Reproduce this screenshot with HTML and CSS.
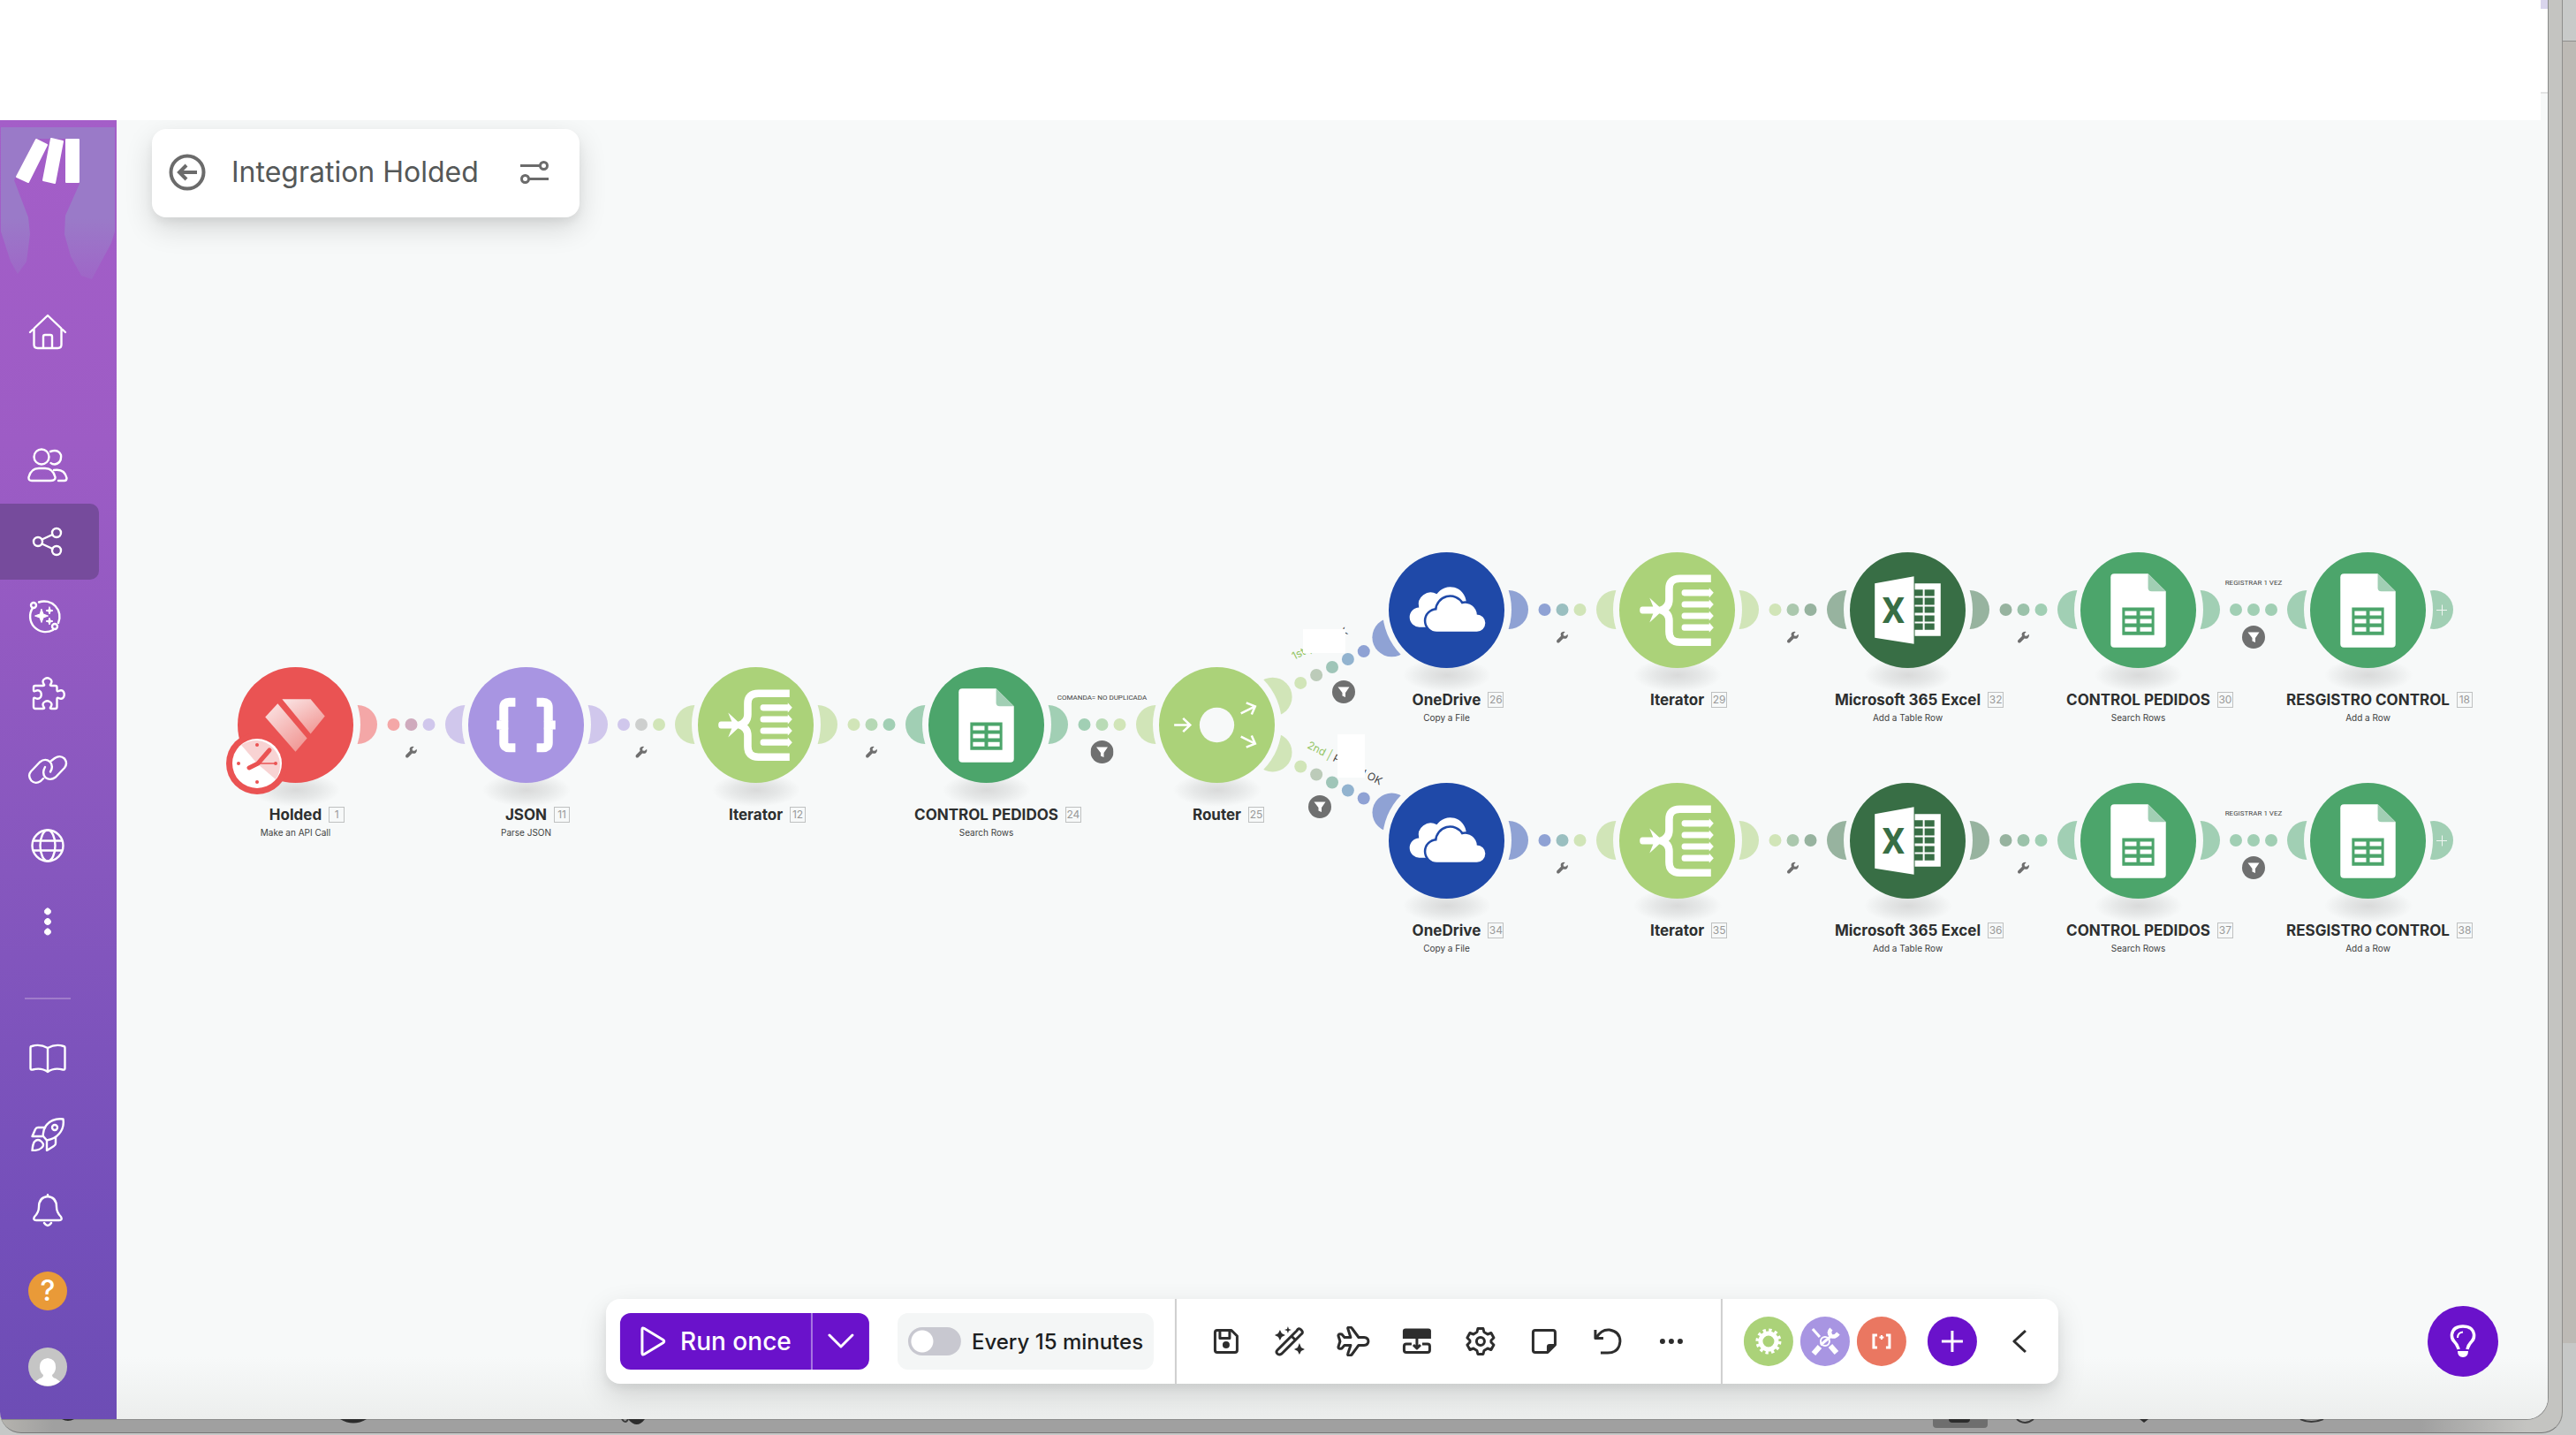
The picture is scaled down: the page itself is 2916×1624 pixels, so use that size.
FILE: index.html
```html
<!DOCTYPE html>
<html lang="en">
<head>
<meta charset="utf-8" />
<title>Integration Holded</title>
<link rel="stylesheet" href="styles.css">
</head>

<body>
<!-- shared icons -->
<svg class="defs" aria-hidden="true">
    <defs>
        <linearGradient id="holdedFade" x1="0" y1="0" x2=".7" y2="1">
            <stop offset="0" stop-color="#fbe6e6"/>
            <stop offset="1" stop-color="#f19a97"/>
        </linearGradient>
        <linearGradient id="ghostFade" x1="0" y1="0" x2="0" y2="1">
            <stop offset=".6" stop-color="#9a7ac8"/>
            <stop offset="1" stop-color="#9a7ac8" stop-opacity=".3"/>
        </linearGradient>
        <symbol id="i-holded" viewBox="-65 -65 130 130">
            <path fill="url(#holdedFade)" d="M-15 -29H17L33 -10L17 10Z"/>
            <path fill="url(#holdedFade)" d="M-20 -24L13 15L0 30L-34 -9Z"/>
        </symbol>
        <symbol id="i-json" viewBox="-65 -65 130 130">
            <g fill="none" stroke="#fff" stroke-width="10">
                <path d="M-12 -25.500H-19Q-25 -25.500 -25 -20V-6Q-25 0 -28 0Q-25 0 -25 6V20Q-25 25.500 -19 25.500H-12"/>
                <path d="M12 -25.500H19Q25 -25.500 25 -20V-6Q25 0 28 0Q25 0 25 6V20Q25 25.500 19 25.500H12"/>
            </g>
            <path fill="#fff" d="M-33 -5H-20V5H-33ZM33 -5H20V5H33Z"/>
        </symbol>
        <symbol id="i-iterator" viewBox="-65 -65 130 130">
            <path fill="none" stroke="#fff" stroke-width="8.500" d="M38 -35.500H3Q-9 -35.500 -9 -24V-12Q-9 -3 -18 0Q-9 3 -9 12V24Q-9 36 3 36H38"/>
            <path fill="#fff" d="M-39 -4H-27L-31 -14L-16 0L-31 14L-27 4H-39Q-42 4 -42 0Q-42 -4 -39 -4Z"/>
            <g id="bars" fill="#fff">
                <path id="bar" d="M8 -23H36V-25L41 -19.500L36 -14V-16H8Q5 -16 5 -19.500Q5 -23 8 -23Z"/>
                <use href="#bar" y="13"/><use href="#bar" y="26"/><use href="#bar" y="39"/>
            </g>
        </symbol>
        <symbol id="i-sheets" viewBox="-65 -65 130 130">
            <path fill="#fff" d="M-27 -41H11L31 -21V38Q31 42 27 42H-27Q-31 42 -31 38V-37Q-31 -41 -27 -41Z"/>
            <path fill="#a1cfb4" d="M11 -41L31 -21H15Q11 -21 11 -25Z"/>
            <path fill="#4ca56b" fill-rule="evenodd" d="M-18 -3H18V28H-18ZM-15 1V6H-2V1ZM2 1V6H15V1ZM-15 10V15H-2V10ZM2 10V15H15V10ZM-15 19V24H-2V19ZM2 19V24H15V19Z"/>
        </symbol>
        <symbol id="i-excel" viewBox="-65 -65 130 130">
            <path fill="#fff" d="M-37 -30L7 -38V38L-37 31Z"/>
            <path fill="#fff" fill-rule="evenodd" d="M8 -30H37V29H8ZM8 -23V-16H17V-23ZM19 -23V-16H30V-23ZM8 -14V-6H17V-14ZM19 -14V-6H30V-14ZM8 -4V3H17V-4ZM19 -4V3H30V-4ZM8 6V13H17V6ZM19 6V13H30V6ZM8 15V22H17V15ZM19 15V22H30V15Z"/>
            <text class="excel-x" x="-16" y="14" text-anchor="middle">X</text>
        </symbol>
        <symbol id="i-onedrive" viewBox="-65 -65 130 130">
            <path fill="#fff" d="M-20 19H-30A11 11 0 0 1 -31 -3A13.500 13.500 0 0 1 -11 -18A18 18 0 0 1 22 -9V0L-10 19Z"/>
            <path fill="#fff" stroke="#1f49a8" stroke-width="5" paint-order="stroke" d="M-11 24A12 12 0 0 1 -11 0A15 15 0 0 1 17 -7A13 13 0 0 1 34 5A9.500 9.500 0 0 1 34 24Z"/>
        </symbol>
        <symbol id="i-router" viewBox="-65 -65 130 130">
            <circle r="19.500" fill="#f7f9f9"/>
            <g fill="none" stroke="#fff" stroke-width="2.500">
                <path d="M-48 0H-31M-38 -7.500L-30 0L-38 7.500"/>
                <path d="M27 -13L43 -21M33 -25L43 -21L39 -12"/>
                <path d="M27 13L43 21M33 25L43 21L39 12"/>
            </g>
        </symbol>
        <symbol id="i-wrench" viewBox="0 0 24 24">
            <path fill="#6f6f6f" d="M22.500 6.500L18.500 10L14.500 9.500L14 5.500L17.500 1.500Q12 0 9.500 4Q8 7 9.500 10L1.500 18Q0 20.500 2 22.500Q4 24 6 22.500L14 14.500Q18 16 21 13.500Q24 10.500 22.500 6.500Z"/>
        </symbol>
        <symbol id="i-filter" viewBox="0 0 26 26">
            <circle cx="13" cy="13" r="13" fill="#6f7070"/>
            <path fill="#fff" d="M6.500 7.500H19.500L15 14V19L11.500 17.500V14Z"/>
        </symbol>
    </defs>
</svg>

<div class="desktop">
<div class="back-window">
<div class="window">
    <div class="topbar"><span class="topbar-edge"></span></div>
    <div class="app">
        <nav class="sidebar" aria-label="Main">
            <a href="#" class="logo" aria-label="Make">
                <svg width="132" height="184" viewBox="0 136 132 184">
                    <path fill="url(#ghostFade)" d="M1 144H130V262L126 275L104 316L92 312L80 290L73 265L74 244L90 208V157H40L16 204L32 246L34 265L30 296L20 310L12 296L1 262Z"/>
                    <path fill="#fff" stroke="#fff" stroke-width="2" stroke-linejoin="round" d="M41 158L53 164L32 206L19 200ZM58 157L71 160L62 207L49 204ZM75 158H89V206H75Z"/>
                </svg>
            </a>
            <a href="#" class="item" aria-label="Home">
                <svg width="44" height="44" viewBox="0 0 44 44"><path d="M2 22L22 3L42 22M6.500 18V36Q6.500 40 10.500 40H33.500Q37.500 40 37.500 36V18M17 40V27Q17 25 19 25H25Q27 25 27 27V40"/></svg>
            </a>
            <a href="#" class="item team" aria-label="Team">
                <svg width="46" height="46" viewBox="0 0 46 46"><ellipse cx="16" cy="13" rx="8.500" ry="8.500"/><path d="M26 7Q35 4 38 11Q39 20 31 21.500Q28 21.500 26.500 20M7.500 40H26Q32 40 31.500 36Q29 26 20 26H13Q4 26 1.500 36Q1 40 5 40ZM30 28Q42 26 44.500 37Q44.500 40 42 40H35"/></svg>
            </a>
            <a href="#" class="item on" aria-label="Scenarios">
                <svg width="36" height="36" viewBox="0 0 36 36"><circle cx="7" cy="18" r="5"/><circle cx="28" cy="8" r="5"/><circle cx="28" cy="28" r="5"/><path d="M11.500 15.500L23.500 10M11.500 20.500L23.500 26"/></svg>
            </a>
            <a href="#" class="item" aria-label="AI agents">
                <svg width="44" height="44" viewBox="0 0 44 44"><path d="M12 4.500A17.500 17.500 0 0 1 34 28M28 36A17.500 17.500 0 0 1 5 11"/><circle cx="6" cy="8" r="3"/><circle cx="30" cy="32" r="3"/><path class="solid" d="M15 12.500L17 18L22.500 20L17 22L15 27.500L13 22L7.500 20L13 18ZM24 10L25 13L28 14L25 15L24 18L23 15L20 14L23 13ZM24 22.500L25 25L28 26L25 27L24 30L23 27L20 26L23 25Z"/></svg>
            </a>
            <a href="#" class="item" aria-label="Templates">
                <svg width="40" height="40" viewBox="0 0 40 40"><path d="M4 13Q4 11 6 11H15Q17 11 15.500 9Q13 5 17 3Q19.500 1.500 22 3Q26 5 23.500 9Q22 11 24 11H28.500Q30.500 11 30.500 13V16Q30.500 18 32.500 17Q36 15 38 18Q39.500 21 38 24Q36 27 32.500 25Q30.500 24 30.500 26V35Q30.500 37 28.500 37H24Q22 37 23.500 35Q26 31 22 29Q19.500 27.500 17 29Q13 31 15.500 35Q17 37 15 37H6Q4 37 4 35V26Q4 24 6 25Q9.500 27 12 24Q13.500 21 12 18Q9.500 15 6 17Q4 18 4 16Z"/></svg>
            </a>
            <a href="#" class="item" aria-label="Connections">
                <svg width="46" height="34" viewBox="0 0 46 34"><path d="M18 27L15 30Q9 34 4.500 29.500Q0 24 4 19L14 8.500Q20 3.500 25.500 8Q30 13 26 19.500"/><path d="M27 7L31 4Q37 0 42 4.500Q46 10 42 15L32 25.500Q26 30 20.500 26Q16 21 20 14"/></svg>
            </a>
            <a href="#" class="item" aria-label="Webhooks">
                <svg width="38" height="38" viewBox="0 0 38 38"><circle cx="19" cy="19" r="17.500"/><ellipse cx="19" cy="19" rx="8.500" ry="17.500"/><path d="M3 13.500H35M3 24.500H35"/></svg>
            </a>
            <a href="#" class="item" aria-label="More">
                <svg width="10" height="34" viewBox="0 0 10 34"><path class="solid" d="M5 2A3.500 3.500 0 1 1 4.900 2ZM5 13.500A3.500 3.500 0 1 1 4.900 13.500ZM5 25A3.500 3.500 0 1 1 4.900 25Z"/></svg>
            </a>
            <hr class="line">
            <a href="#" class="item" aria-label="Resource hub">
                <svg width="42" height="34" viewBox="0 0 42 34"><path d="M21 5Q12 0 3 3Q1.500 3 1.500 5V28Q1.500 30 4 29.500Q14 27 21 32Q28 27 38 29.500Q40.500 30 40.500 28V5Q40.500 3 39 3Q30 0 21 5V32"/></svg>
            </a>
            <a href="#" class="item" aria-label="What's new">
                <svg width="38" height="38" viewBox="0 0 38 38"><path d="M36.500 1.500Q24 0 17 9Q13 15 14 21L18 25.500Q27 24 32 18Q38 11 36.500 1.500Z"/><circle cx="27" cy="11" r="3"/><path d="M16 11H8Q6 11 5 13L1.500 21H13M18 26V37L26 32Q28 31 28 29V22M1.500 37Q2 30 4 27Q8 23 12 27Q16 31 12 34Q9 37 1.500 37Z"/></svg>
            </a>
            <a href="#" class="item" aria-label="Notifications">
                <svg width="34" height="38" viewBox="0 0 34 38"><path d="M17 1V3M17 3Q7 4 7 15Q7 21 2 26Q0 30 4 30H30Q34 30 32 26Q27 21 27 15Q27 4 17 3ZM13 33Q17 39 21 33"/></svg>
            </a>
            <button type="button" class="help" aria-label="Help">?</button>
            <button type="button" class="avatar" aria-label="Profile">
                <svg width="44" height="44" viewBox="0 0 44 44"><circle cx="22" cy="22" r="22" fill="#c5c5c5"/><path fill="#fff" d="M22 12Q32 13 31 24Q30 29 27 31Q27 34 31 35L36 38.500A22 22 0 0 1 8 38.500L13 35Q17 34 17 31Q14 29 13 24Q12 13 22 12Z"/></svg>
            </button>
        </nav>

        <main class="canvas" id="canvas">
            <svg class="wires" id="wires"></svg>
            <header class="title-card">
                <button type="button" class="plain" aria-label="Back">
                    <svg width="44" height="44" viewBox="0 0 44 44" fill="none" stroke="#6b6b6b" stroke-width="4"><circle cx="22" cy="22" r="18.500"/><path d="M33 22H13M21 14L13 22L21 30"/></svg>
                </button>
                <h1>Integration Holded</h1>
                <button type="button" class="plain" aria-label="Scenario inputs">
                    <svg width="34" height="28" viewBox="0 0 34 28" fill="none" stroke="#6b6b6b" stroke-width="3"><path d="M1 6.500H23M11 21.500H33"/><circle cx="27.500" cy="6.500" r="4"/><circle cx="6.500" cy="21.500" r="4"/></svg>
                </button>
            </header>

            <div class="toolbar">
                <div class="run">
                    <button type="button" class="run-main">
                        <svg width="30" height="34" viewBox="0 0 30 34"><path d="M3 3.500Q3 1 5.500 2.500L27 15.500Q28.500 17 27 18.500L5.500 31.500Q3 33 3 30.500Z"/></svg>
                        Run once
                    </button>
                    <button type="button" class="run-more" aria-label="Run options">
                        <svg width="30" height="18" viewBox="0 0 30 18"><path d="M2 2L15 15L28 2"/></svg>
                    </button>
                </div>
                <label class="schedule"><input type="checkbox" role="switch">Every 15 minutes</label>
                <div class="tools">
                    <button type="button" aria-label="Save"><svg width="32" height="32" viewBox="0 0 32 32"><path d="M6 3.500H22L28.500 10V26Q28.500 28.500 26 28.500H6Q3.500 28.500 3.500 26V6Q3.500 3.500 6 3.500ZM9 4V12.500H20V4"/><circle class="fill" cx="16" cy="20" r="4"/></svg></button>
                    <button type="button" aria-label="Auto-align"><svg width="36" height="34" viewBox="0 0 36 34"><path d="M4 27L26 5Q28 1 31 4Q34 7 31 9L9 31Q6 33 4 31Q2 29 4 27ZM20 11L24 15"/><path class="fill" d="M7 4L9 8L13 10L9 12L7 16L5 12L1 10L5 8ZM16 0L17 3L20 4L17 5L16 8L15 5L12 4L15 3ZM29 19L31 24L35 26L31 28L29 32L27 28L23 26L27 24Z"/></svg></button>
                    <button type="button" aria-label="Explain flow"><svg width="38" height="34" viewBox="0 0 38 34"><path d="M13 3Q12 1 15 1Q17 1 18 3L25 12.500H31Q36 13 36 17Q36 21 31 21.500H25L18 31Q17 33 14.500 33Q12 33 13 30.500L16 21.500H9L6 25Q2 26 2 23.500L4 17L2 10.500Q2 8 6 9L9 12.500H16Z"/></svg></button>
                    <button type="button" aria-label="Notes"><svg width="36" height="34" viewBox="0 0 36 34"><path class="fill" d="M5 2.500H31Q34 2.500 34 5.500V14H2V5.500Q2 2.500 5 2.500Z"/><path d="M12 20H6Q3.500 20 3.500 22.500V27Q3.500 29.500 6 29.500H30Q32.500 29.500 32.500 27V22.500Q32.500 20 30 20H24M18 13V25M14 21L18 25L22 21"/></svg></button>
                    <button type="button" aria-label="Settings"><svg width="34" height="34" viewBox="0 0 34 34"><path d="M14 2.500H20L21 6.500L25 9L29 7.500L32 13L29 16V18L32 21L29 26.500L25 25L21 27.500L20 31.500H14L13 27.500L9 25L5 26.500L2 21L5 18V16L2 13L5 7.500L9 9L13 6.500Z"/><circle cx="17" cy="17" r="4.500"/></svg></button>
                    <button type="button" aria-label="Sticky note"><svg width="32" height="32" viewBox="0 0 32 32"><path d="M6 3.500H26Q28.500 3.500 28.500 6V20L20 28.500H6Q3.500 28.500 3.500 26V6Q3.500 3.500 6 3.500Z"/><path class="fill" d="M19 29V22Q19 19 22 19H29Z"/></svg></button>
                    <button type="button" aria-label="Undo"><svg width="34" height="32" viewBox="0 0 34 32"><path d="M3 3V12.500H12M4 12Q10 2 19 3Q31 5 31 16Q30 29 17 29H9"/></svg></button>
                    <button type="button" aria-label="More tools"><svg width="28" height="10" viewBox="0 0 28 10"><circle class="fill" cx="4" cy="5" r="3"/><circle class="fill" cx="14" cy="5" r="3"/><circle class="fill" cx="24" cy="5" r="3"/></svg></button>
                </div>
                <div class="apps">
                    <button type="button" class="round lime" aria-label="Flow control"><svg width="32" height="32" viewBox="-16 -16 32 32"><circle r="9" fill="none" stroke="#fff" stroke-width="5"/><circle r="12.500" fill="none" stroke="#fff" stroke-width="4" stroke-dasharray="3.270 3.270"/></svg></button>
                    <button type="button" class="round violet" aria-label="Tools"><svg width="36" height="36" viewBox="0 0 36 36" fill="none" stroke="#fff"><path stroke-width="3" d="M4 4L12 13M13 22L25 12"/><path stroke-width="6" d="M24 23L31 31M12 24L5 32"/><circle cx="18" cy="18" r="5" stroke-width="2"/><path stroke-width="4.500" d="M25 4Q21 8 25 12Q29 14 33 9"/></svg></button>
                    <button type="button" class="round coral" aria-label="Text parser"><svg width="28" height="28" viewBox="0 0 28 28" fill="none" stroke="#fff" stroke-width="3"><path d="M9 7H5V21H9M19 7H23V21H19"/><path stroke-width="2" d="M14 7V12M11.500 9.500H16.500"/></svg></button>
                    <button type="button" class="round add" aria-label="Add app"><svg width="28" height="28" viewBox="0 0 28 28" fill="none" stroke="#fff" stroke-width="3"><path d="M14 2V26M2 14H26"/></svg></button>
                    <button type="button" class="fold" aria-label="Collapse"><svg width="18" height="28" viewBox="0 0 18 28"><path d="M16 2L3 14L16 26"/></svg></button>
                </div>
            </div>

            <button type="button" class="bulb" aria-label="Tips">
                <svg width="30" height="40" viewBox="0 0 30 40"><path fill="none" stroke="#fff" stroke-width="3.500" d="M10 29Q9 24 5 20Q2 17 2.500 12Q4 3 15 3Q26 3 27.500 12Q28 17 25 20Q21 24 20 29"/><path fill="none" stroke="#fff" stroke-width="2" d="M9 16Q9 10 15 9.500"/><path fill="#fff" d="M9 31H21Q21 38 15 38Q9 38 9 31Z"/></svg>
            </button>
        </main>
    </div>
</div>
<!-- toolbar icons of the window behind -->
<svg class="peek" width="2884" height="15" viewBox="0 0 2884 15">
    <path fill="#6e6e6e" d="M2188 0H2250V6Q2250 10 2246 10H2192Q2188 10 2188 6Z"/>
    <path fill="#2c2c2c" d="M2206 0H2230Q2230 4 2226 4H2210Q2206 4 2206 0ZM711 0H730Q721 12 711 0ZM385 0H415Q400 9 385 0ZM70 0H84Q77 4 70 0ZM2422 0H2432L2427 4Z"/>
    <path fill="none" stroke="#3a3a3a" stroke-width="2" d="M704 0Q708 6 711 0M2283 0Q2292 8 2302 0M2604 0Q2616 6 2630 0"/>
</svg>
</div>
</div>
<script src="script.js"></script>
</body>
</html>
```

FILE: styles.css
```css
*{
	margin:0;
	padding:0;
	box-sizing:border-box;}
body{
	font-family:Inter, "Liberation Sans", sans-serif;
	color:#2d2f2f;
	background:#bdbab5;
	overflow:hidden;}
button{
	font:inherit;
	color:inherit;
	border:0;
	background:none;
	cursor:pointer;}
svg{
	display:block;
	flex:none;}
.defs{
	position:absolute;
	width:0;
	height:0;}

/* stacked windows */
.desktop{
	height:100vh;
	padding:0 16px 2px 0;
	background:linear-gradient(#c8cac9 46px, #8f8f8d 46px, #8f8f8d 47px, #bdbab5 47px, #bdbab5 1520px, #c6c8c7 1520px);}
.back-window{
	height:100%;
	padding-right:16px;
	border-right:1px solid #8e8e8c;
	border-bottom:1px solid #777;
	border-radius:0 0 24px 24px;
	background:linear-gradient(90deg, #b5b3ae, #a0a0a0 60px, #a0a0a0 2740px, #c4c4c1 2860px);
	overflow:hidden;
	display:flex;
	flex-direction:column;
	margin-right:-1px;}
.window{
	flex:1;
	display:flex;
	flex-direction:column;
	background:#f7f9f9;
	border-radius:0 0 24px 0;
	box-shadow:0 0 0 1px #8a8b8a;
	overflow:hidden;}
.topbar{
	height:136px;
	background:#fff;
	display:flex;
	justify-content:flex-end;
	flex:none;}
.topbar-edge{
	width:8px;
	background:linear-gradient(#d9d5ec 10px, #fff 10px, #fff 104px, #e2e3e3 104px, #e2e3e3 106px, #f7f9f9 106px);}
.app{
	flex:1;
	display:flex;
	min-height:0;}

/* sidebar */
.sidebar{
	width:132px;
	flex:none;
	background:linear-gradient(#a45ec8, #9d5cc5 25%, #8657be 58%, #744fba 85%, #6d4db5);}
.logo{
	display:block;
	margin-bottom:13px;}
.item{
	width:112px;
	height:86px;
	padding-right:4px;
	display:flex;
	align-items:center;
	justify-content:center;
	border-radius:0 10px 10px 0;}
.item svg{
	fill:none;
	stroke:#fff;
	stroke-width:2.4;
	stroke-linecap:round;
	stroke-linejoin:round;}
.item .solid{
	fill:#fff;
	stroke-width:1;}
.team{
	margin-top:65px;}
.on{
	background:#764b9c;}
.line{
	width:52px;
	margin:43px 0 24px 28px;
	border:0;
	border-top:2px solid #a07cca;}
.help, .avatar{
	display:block;
	width:44px;
	height:44px;
	margin:26px 0 0 32px;
	border-radius:50%;}
.help{
	background:#e99a38;
	color:#fff;
	font-size:32px;
	line-height:44px;
	font-weight:500;}
.avatar{
	margin-top:42px;}

/* canvas */
.canvas{
	flex:1;
	position:relative;
	background:linear-gradient(#f7f9f9 calc(100% - 70px), #eceeed);
	overflow:hidden;}
.wires{
	position:absolute;
	left:0;
	top:0;
	width:100%;
	height:100%;}
.title-card{
	position:absolute;
	left:40px;
	top:10px;
	height:100px;
	padding:0 34px 2px 18px;
	display:flex;
	align-items:center;
	border-radius:16px;
	background:#fff;
	box-shadow:0 12px 32px rgba(0,0,0,.14), 0 6px 10px rgba(0,0,0,.05);}
.title-card h1{
	margin:0 46px 0 28px;
	font-size:32px;
	line-height:40px;
	font-weight:400;
	color:#555858;}

/* modules */
.module{
	position:absolute;
	width:131px;
	display:flex;
	flex-direction:column;
	align-items:center;
	white-space:nowrap;}
.module::before{
	content:"";
	position:absolute;
	top:120px;
	width:100px;
	height:38px;
	border-radius:50%;
	background:radial-gradient(closest-side, #d9dada, #e5e7e7 50%, #f7f9f9);}
.disc{
	position:relative;
	width:131px;
	height:131px;
	border-radius:50%;}
.disc svg{
	width:131px;
	height:131px;}
.excel-x{
	font:700 40px Roboto, sans-serif;
	fill:#386e45;}
.clock{
	position:absolute;
	left:-13px;
	top:74px;
	z-index:1;}
.module h2{
	position:relative;
	margin-top:26px;
	font-size:17px;
	line-height:20px;
	font-weight:700;}
.module .num{
	position:absolute;
	left:100%;
	top:1px;
	margin-left:8px;
	width:18px;
	height:18px;
	border:1px solid #bfc1c1;
	font-size:12px;
	line-height:16px;
	font-weight:400;
	text-align:center;
	color:#999;}
.module p{
	margin-top:2px;
	font-size:10px;
	line-height:16px;
	color:#3d3f3f;}
.filter-name{
	font-family:"Liberation Sans Narrow", Roboto, sans-serif;
	font-size:8px;
	fill:#444;
	text-anchor:middle;}
.route{
	font-size:12px;
	fill:#444;}
.route .nth{
	fill:#93c565;}

/* bottom toolbar */
.toolbar{
	position:absolute;
	left:50%;
	bottom:40px;
	transform:translateX(-50%);
	height:96px;
	padding:0 20px 0 16px;
	display:flex;
	align-items:center;
	border-radius:16px;
	background:#fff;
	white-space:nowrap;
	box-shadow:0 12px 32px rgba(0,0,0,.14), 0 6px 10px rgba(0,0,0,.05);}
.run{
	display:flex;
	height:64px;
	border-radius:12px;
	overflow:hidden;
	color:#fff;
	background:#6a12cb;}
.run svg{
	fill:none;
	stroke:#fff;
	stroke-width:3;
	stroke-linecap:round;
	stroke-linejoin:round;}
.run-main{
	width:216px;
	display:flex;
	align-items:center;
	justify-content:center;
	gap:16px;
	font-size:28px;
	font-weight:500;}
.run-more{
	width:66px;
	display:flex;
	align-items:center;
	justify-content:center;
	border-left:2px solid #a878e2;}
.schedule{
	display:flex;
	align-items:center;
	gap:12px;
	height:64px;
	margin:0 24px 0 32px;
	padding:0 12px;
	border-radius:12px;
	background:#f4f6f6;
	font-size:24px;
	font-weight:500;
	color:#1d1f1f;}
.schedule input{
	appearance:none;
	width:60px;
	height:32px;
	border-radius:16px;
	background:radial-gradient(circle at 16px 16px, #fff 12px, transparent 13px), #c8c8d0;}
.tools{
	display:flex;
	height:96px;
	padding:0 20px;
	border:solid #cfcfcf;
	border-width:0 2px;}
.tools button{
	width:72px;
	display:flex;
	align-items:center;
	justify-content:center;}
.tools svg, .fold svg{
	fill:none;
	stroke:#2d2d2d;
	stroke-width:3;
	stroke-linejoin:round;}
.tools .fill{
	fill:#2d2d2d;
	stroke:none;}
.apps{
	display:flex;
	align-items:center;
	gap:8px;
	padding-left:24px;}
.round{
	width:56px;
	height:56px;
	border-radius:50%;
	display:flex;
	align-items:center;
	justify-content:center;}
.lime{
	background:#abd279;}
.violet{
	background:#a895e2;}
.coral{
	background:#ea7761;}
.add{
	margin:0 16px;
	background:#6a12cb;}
.fold{
	width:48px;
	height:56px;
	display:flex;
	align-items:center;
	justify-content:center;}
.bulb{
	position:absolute;
	right:56px;
	bottom:48px;
	width:80px;
	height:80px;
	border-radius:50%;
	background:#6a12cb;
	display:flex;
	align-items:center;
	justify-content:center;}
```

FILE: script.js
```js
window.onload=function(){
	var canvas=document.getElementById('canvas');
	var wires=document.getElementById('wires');
	var color={
		holded:['#ea5353','#f4a7a7'],
		json:['#a895e2','#d0c7ec'],
		iterator:['#abd279','#d1e5b8'],
		sheets:['#4ca56b','#a1cfb4'],
		router:['#abd279','#d1e5b8'],
		onedrive:['#1f49a8','#8fa2d4'],
		excel:['#386e45','#97b39f']
	};
	//x, y, type, name, number, action
	var modules=[
		[203,684,'holded','Holded',1,'Make an API Call'],
		[464,684,'json','JSON',11,'Parse JSON'],
		[724,684,'iterator','Iterator',12,''],
		[985,684,'sheets','CONTROL PEDIDOS',24,'Search Rows'],
		[1246,684,'router','Router',25,''],
		[1506,554,'onedrive','OneDrive',26,'Copy a File'],
		[1767,554,'iterator','Iterator',29,''],
		[2028,554,'excel','Microsoft 365 Excel',32,'Add a Table Row'],
		[2289,554,'sheets','CONTROL PEDIDOS',30,'Search Rows'],
		[2549,554,'sheets','RESGISTRO CONTROL',18,'Add a Row'],
		[1506,815,'onedrive','OneDrive',34,'Copy a File'],
		[1767,815,'iterator','Iterator',35,''],
		[2028,815,'excel','Microsoft 365 Excel',36,'Add a Table Row'],
		[2289,815,'sheets','CONTROL PEDIDOS',37,'Search Rows'],
		[2549,815,'sheets','RESGISTRO CONTROL',38,'Add a Row']
	];
	//from, to, middle dots, filter name
	var links=[
		[0,1,['#cfaabd']],[1,2,['#cdcfce']],[2,3,['#b5d8b5']],
		[3,4,['#b9dbb6'],'COMANDA= NO DUPLICADA'],
		[4,5,['#bccbb9','#9fc5b8','#92b3cf']],
		[4,10,['#bccbb9','#9fc5b8','#92b3cf']],
		[5,6,['#9abfc0']],[6,7,['#abc8ae']],[7,8,['#9bc2aa']],[8,9,['#a1cfb4'],'REGISTRAR 1 VEZ'],
		[10,11,['#9abfc0']],[11,12,['#abc8ae']],[12,13,['#9bc2aa']],[13,14,['#a1cfb4'],'REGISTRAR 1 VEZ']
	];
	function dot(x,y,r,fill){
		return '<circle cx="'+x+'" cy="'+y+'" r="'+r+'" fill="'+fill+'"/>';
		}
	function icon(name,x,y,size){
		return '<use href="#i-'+name+'" x="'+(x-size/2)+'" y="'+(y-size/2)+'" width="'+size+'" height="'+size+'"/>';
		}
	var out='';
	for(var i=0; i<links.length; i++){
		var a=modules[links[i][0]], b=modules[links[i][1]];
		var dx=b[0]-a[0], dy=b[1]-a[1], len=Math.sqrt(dx*dx+dy*dy);
		var ux=dx/len, uy=dy/len;
		out+=dot(a[0]+ux*70,a[1]+uy*70,22,color[a[2]][1]);
		out+=dot(b[0]-ux*70,b[1]-uy*70,22,color[b[2]][1]);
		var dots=[color[a[2]][1]].concat(links[i][2],[color[b[2]][1]]);
		for(var j=0; j<dots.length; j++){
			var d=len/2+(j-(dots.length-1)/2)*20;
			out+=dot(a[0]+ux*d,a[1]+uy*d,7,dots[j]);
			}
		var mx=(a[0]+b[0])/2;
		if(dy==0){
			if(links[i][3]){
				out+=icon('filter',mx,a[1]+31,26);
				out+='<text class="filter-name" x="'+mx+'" y="'+(a[1]-28)+'">'+links[i][3]+'</text>';
				}
			else{
				out+=icon('wrench',mx,a[1]+31,14);
				}
			}
		}
	//open ends with a plus
	for(i=9; i<15; i+=5){
		var m=modules[i];
		out+=dot(m[0]+74,m[1],22,color.sheets[1]);
		out+='<path stroke="#f0f5f2" stroke-width="1" d="M'+(m[0]+77)+' '+(m[1]+.5)+'h12m-5.5 -6v12"/>';
		}
	//gap between a module and its ears
	for(i=0; i<modules.length; i++){
		out+=dot(modules[i][0],modules[i][1],73,'#f7f9f9');
		}
	//route names
	out+='<text class="route" transform="translate(1333,611) rotate(-27)"><tspan class="nth">1st |</tspan></text>';
	out+='<text class="route" transform="translate(1379,589) rotate(-27)">OK</text>';
	out+='<text class="route" transform="translate(1347,710) rotate(27)"><tspan class="nth">2nd |</tspan> P</text>';
	out+='<text class="route" transform="translate(1409,742) rotate(27)">l OK</text>';
	out+='<path fill="#fff" d="M1343 576h48v27h-48zM1382 695h31v49h-31z"/>';
	out+=icon('filter',1389,647,26)+icon('filter',1362,777,26);
	wires.innerHTML=out;

	for(i=0; i<modules.length; i++){
		m=modules[i];
		var div=document.createElement('div');
		div.className='module';
		div.style.left=(m[0]-66)+'px';
		div.style.top=(m[1]-65)+'px';
		div.innerHTML='<div class="disc" style="background:'+color[m[2]][0]+'"><svg><use href="#i-'+m[2]+'"/></svg></div>'
			+'<h2>'+m[3]+'<span class="num">'+m[4]+'</span></h2>'+(m[5] ? '<p>'+m[5]+'</p>' : '');
		if(m[2]=='holded'){
			div.innerHTML+='<svg class="clock" width="70" height="70" viewBox="-35 -35 70 70"><circle r="35" fill="#ea5353"/><circle r="28" fill="#fff"/>'
				+'<path fill="#f8d3d3" d="M0 0L-18 -21A28 28 0 0 1 21 18Z"/><path stroke="#ea5353" stroke-width="1.5" d="M0 0H20"/>'
				+'<path fill="none" stroke="#ea5353" stroke-width="5" stroke-linecap="round" stroke-linejoin="round" d="M-9 5L1 0L14 -15"/>'
				+dot(0,-21,2,'#ea5353')+dot(0,21,2,'#ea5353')+dot(-21,0,2,'#ea5353')+dot(21,0,2,'#ea5353')+'</svg>';
			}
		canvas.appendChild(div);
		}
	}
```
